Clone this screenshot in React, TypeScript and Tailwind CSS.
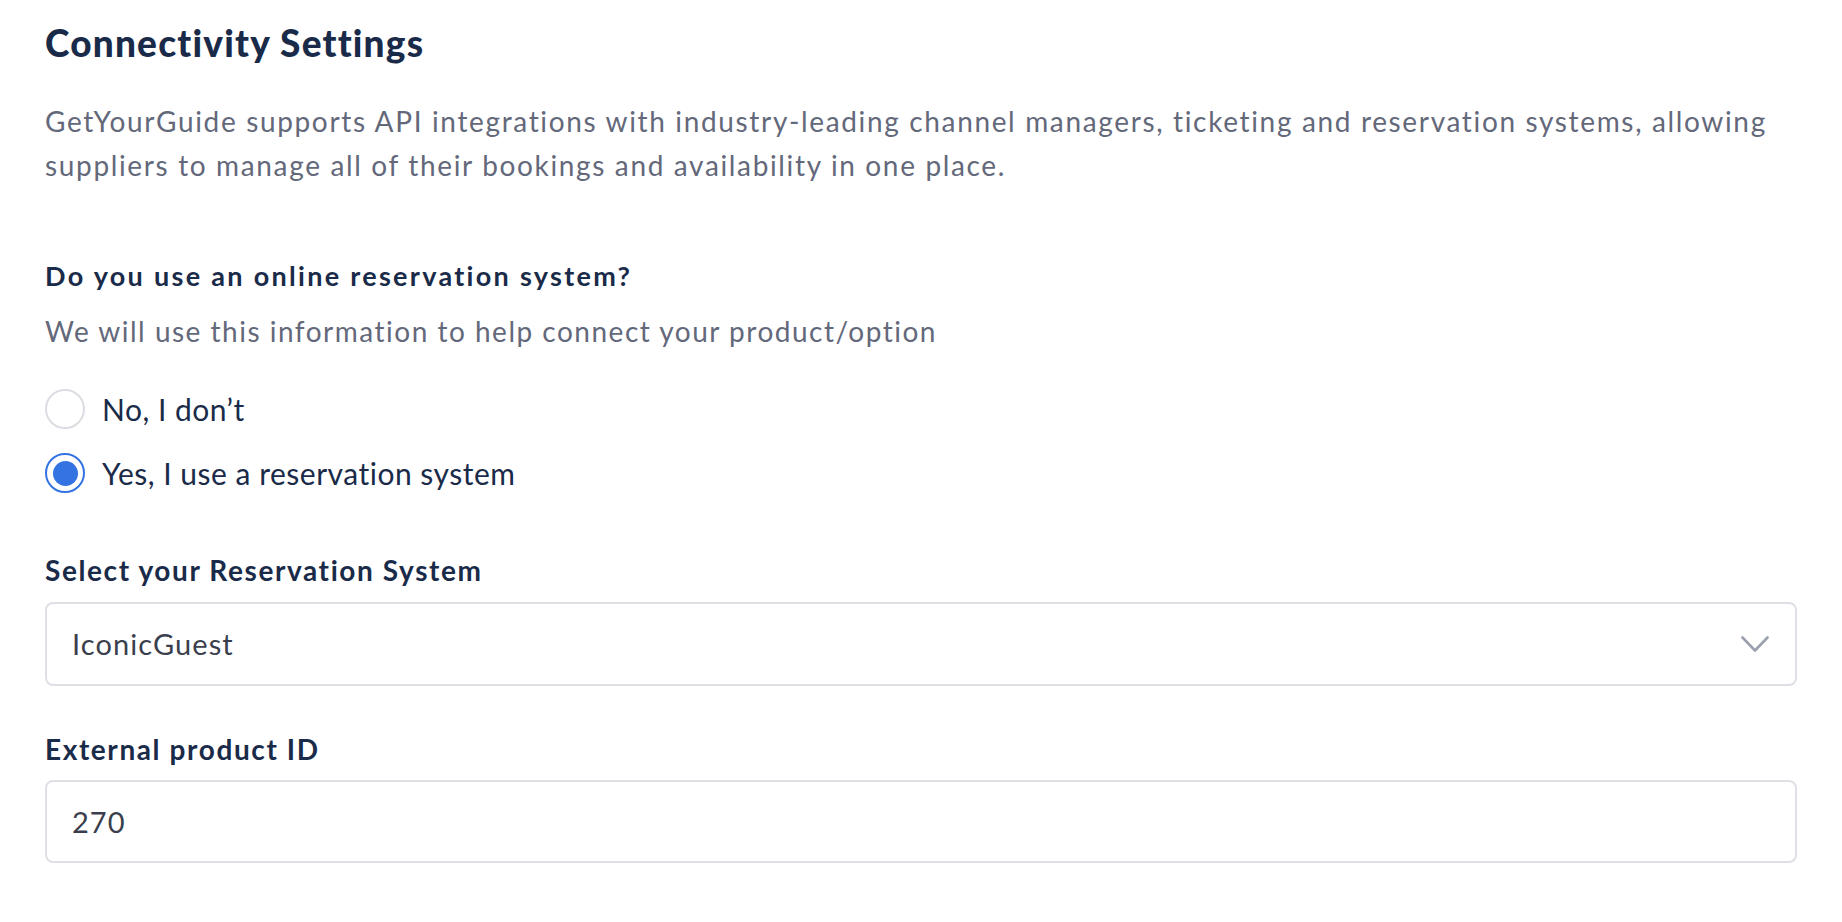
/**
 * Connectivity settings form: intro copy, a yes/no radio pair for whether a
 * reservation system is used, then the system picker and external product ID.
 */

const FONT = "font-['Lato','Open_Sans',sans-serif]";

interface RadioOptionProps {
  label: string;
  checked?: boolean;
}

function RadioOption({ label, checked = false }: RadioOptionProps) {
  return (
    <label className="flex h-[40px] items-center gap-[17px]">
      {checked ? (
        <span className="flex h-[40px] w-[40px] items-center justify-center rounded-full border-2 border-[#3473e2] bg-white">
          <span className="h-[25px] w-[25px] rounded-full bg-[#3473e2]" />
        </span>
      ) : (
        <span className="h-[40px] w-[40px] rounded-full border-2 border-[#dcdde3] bg-white" />
      )}
      <span className="text-[30px] leading-[40px] tracking-[0.5px] text-[#1a2b49]">{label}</span>
    </label>
  );
}

function FieldLabel({ children }: { children: string }) {
  return (
    <div className="text-[28px] font-bold leading-[36px] tracking-[1.6px] text-[#1a2b49]">
      {children}
    </div>
  );
}

export default function App() {
  return (
    <div className={`${FONT} min-h-screen bg-white px-[45px] pt-[21px] antialiased`}>
      <h1 className="text-[37px] font-black leading-[44px] tracking-[1.2px] text-[#1a2b49]">
        Connectivity Settings
      </h1>

      <p className="mt-[34px] text-[28px] leading-[44px] tracking-[1.65px] text-[#63687a]">
        GetYourGuide supports API integrations with industry-leading channel managers,
        ticketing and reservation systems, allowing suppliers to manage all of their
        bookings and availability in one place.
      </p>

      <div className="mt-[71px] text-[27px] font-bold leading-[36px] tracking-[2.3px] text-[#1a2b49]">
        Do you use an online reservation system?
      </div>
      <div className="mt-[17px] text-[28px] leading-[40px] tracking-[1.5px] text-[#63687a]">
        We will use this information to help connect your product/option
      </div>

      <div className="mt-[38px] flex flex-col gap-[24px]">
        <RadioOption label="No, I don’t" />
        <RadioOption label="Yes, I use a reservation system" checked />
      </div>

      <div className="mt-[59px]">
        <FieldLabel>Select your Reservation System</FieldLabel>
      </div>
      <div className="mt-[14px] flex h-[84px] items-center justify-between rounded-[8px] border-2 border-[#dfe0e6] bg-white pl-[25px] pr-[26px]">
        <span className="text-[29px] tracking-[1.1px] text-[#3b3f4d]">IconicGuest</span>
        <svg width="28" height="17" viewBox="0 0 28 17" fill="none" aria-hidden="true">
          <path
            d="M1.5 1.5 14 14.5 26.5 1.5"
            stroke="#9aa0ad"
            strokeWidth="2.6"
            strokeLinecap="round"
            strokeLinejoin="round"
          />
        </svg>
      </div>

      <div className="mt-[45px]">
        <FieldLabel>External product ID</FieldLabel>
      </div>
      <div className="mt-[13px] flex h-[83px] items-center rounded-[8px] border-2 border-[#dfe0e6] bg-white pl-[25px]">
        <span className="text-[29px] tracking-[1px] text-[#3b3f4d]">270</span>
      </div>
    </div>
  );
}
